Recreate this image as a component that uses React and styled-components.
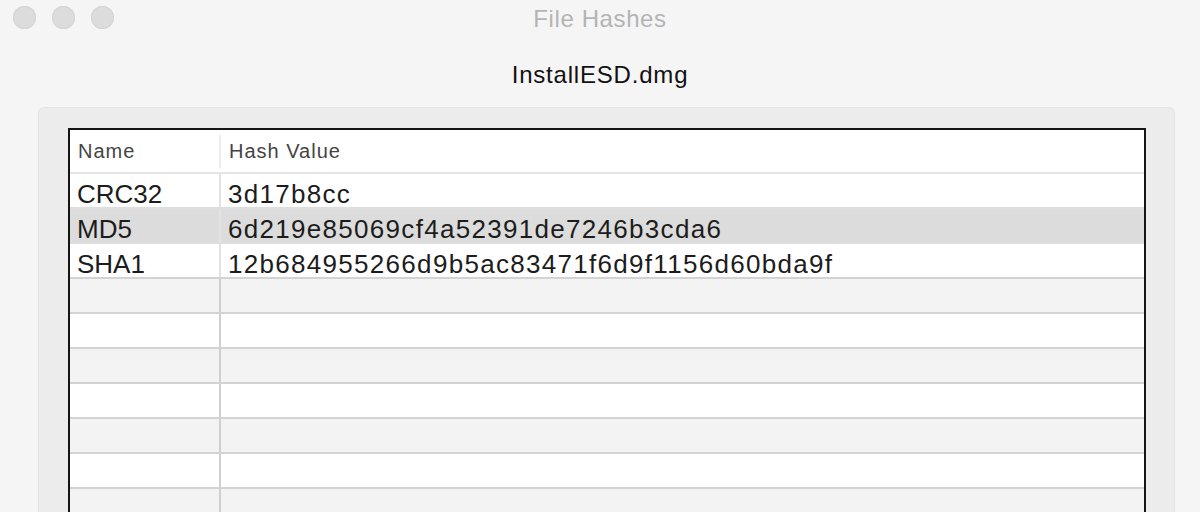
import React from "react";
import styled, { createGlobalStyle } from "styled-components";

const Global = createGlobalStyle`
  html, body { margin: 0; padding: 0; }
  body {
    background: #f5f5f5;
    font-family: "Liberation Sans", Arial, sans-serif;
  }
`;

const Window = styled.div`
  width: 1200px;
  height: 512px;
  display: flex;
  flex-direction: column;
  background: #f5f5f5;
  overflow: hidden;
`;

const TitleBar = styled.div`
  height: 37px;
  display: grid;
  grid-template-columns: 1fr auto 1fr;
  align-items: center;
`;

const Lights = styled.div`
  display: flex;
  gap: 16px;
  padding-left: 13px;
`;

const Light = styled.span`
  width: 23px;
  height: 23px;
  border-radius: 50%;
  background: #dcdcdc;
  box-shadow: inset 0 0 0 1px #d5d5d5;
  margin-top: -3px;
`;

const WindowTitle = styled.div`
  font-size: 24px;
  line-height: 37px;
  letter-spacing: 0.6px;
  color: #b4b4b4;
`;

const FileName = styled.div`
  padding-top: 22px;
  line-height: 32px;
  margin-bottom: 16px;
  font-size: 24px;
  letter-spacing: 0.8px;
  color: #111;
  text-align: center;
`;

const Panel = styled.div`
  flex: 1;
  margin: 0 25px 0 38px;
  padding: 20px 28px 0 29px;
  background: #ececec;
  border: 1px solid #e4e4e4;
  border-bottom: none;
  border-radius: 6px 6px 0 0;
  display: flex;
  flex-direction: column;
  min-height: 0;
`;

const Table = styled.div`
  flex: 1;
  background: #fff;
  border: 2px solid #151515;
  border-bottom: none;
  display: flex;
  flex-direction: column;
  overflow: hidden;
`;

const HeaderRow = styled.div`
  flex: none;
  height: 44px;
  box-sizing: border-box;
  display: grid;
  grid-template-columns: 149px 1fr;
  align-items: center;
  border-bottom: 2px solid #e6e6e6;
  background: #fff;
`;

const HeaderCell = styled.div`
  height: 33px;
  display: flex;
  align-items: center;
  padding-left: 8px;
  font-size: 20px;
  letter-spacing: 1px;
  color: #444;
  border-left: ${(p) => (p.$first ? "none" : "2px solid #ececec")};
`;

const Row = styled.div`
  flex: none;
  height: 35px;
  box-sizing: border-box;
  display: grid;
  grid-template-columns: 149px 1fr;
  border-bottom: 2px solid ${(p) => (p.$empty ? "#d3d3d3" : "#dedede")};
  background: ${(p) =>
    p.$selected ? "#dcdcdc" : p.$odd ? "#f3f3f3" : "#ffffff"};
`;

const Cell = styled.div`
  box-sizing: border-box;
  padding: 8px 0 0 7px;
  font-size: 26px;
  line-height: 25px;
  letter-spacing: ${(p) => (p.$first ? "0" : "1.3px")};
  color: #1c1c1c;
  white-space: nowrap;
  border-left: ${(p) =>
    p.$first ? "none" : `2px solid ${p.$empty ? "#d0d0d0" : "#e2e2e2"}`};
`;

const data = [
  { name: "CRC32", value: "3d17b8cc" },
  { name: "MD5", value: "6d219e85069cf4a52391de7246b3cda6", selected: true },
  { name: "SHA1", value: "12b684955266d9b5ac83471f6d9f1156d60bda9f" },
];

const TOTAL_ROWS = 11;

export default function App() {
  const rows = Array.from({ length: TOTAL_ROWS }, (_, i) => data[i] || null);
  return (
    <>
      <Global />
      <Window>
        <TitleBar>
          <Lights>
            <Light />
            <Light />
            <Light />
          </Lights>
          <WindowTitle>File Hashes</WindowTitle>
          <div />
        </TitleBar>
        <FileName>InstallESD.dmg</FileName>
        <Panel>
          <Table>
            <HeaderRow>
              <HeaderCell $first>Name</HeaderCell>
              <HeaderCell>Hash Value</HeaderCell>
            </HeaderRow>
            {rows.map((r, i) => (
              <Row
                key={i}
                $odd={i % 2 === 1}
                $selected={r && r.selected}
                $empty={!r || i === 2}
              >
                <Cell $first $empty={!r}>{r ? r.name : ""}</Cell>
                <Cell $empty={!r}>{r ? r.value : ""}</Cell>
              </Row>
            ))}
          </Table>
        </Panel>
      </Window>
    </>
  );
}
